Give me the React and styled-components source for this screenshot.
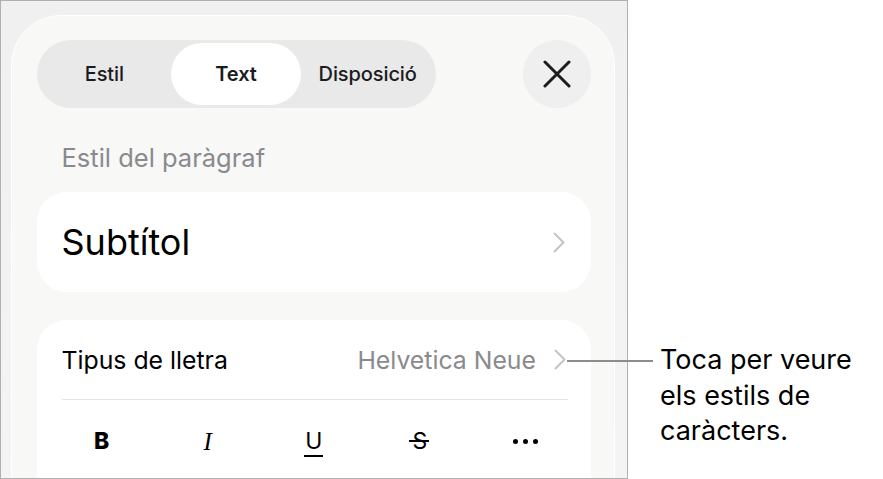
import React from 'react';
import styled, { createGlobalStyle } from 'styled-components';

const Global = createGlobalStyle`
  html, body { margin: 0; padding: 0; background: #ffffff; }
  body {
    font-family: Inter, "Noto Sans", sans-serif;
    -webkit-font-smoothing: antialiased;
  }
`;

const Page = styled.div`
  position: relative;
  display: flex;
  width: 883px;
  height: 479px;
  overflow: hidden;
`;

const Frame = styled.div`
  box-sizing: border-box;
  flex-shrink: 0;
  width: 628px;
  height: 479px;
  border: 1px solid #b0b0b0;
  background: linear-gradient(#f0f0f0, #f4f4f4);
  padding: 14px 12px 0 10px;
  overflow: hidden;
`;

const Sheet = styled.div`
  box-sizing: border-box;
  height: 540px;
  background: #f8f8f7;
  border: 1.5px solid #ffffff;
  border-radius: 50px;
  padding: 24px 23px 0 24.5px;
  display: flex;
  flex-direction: column;
`;

const Header = styled.div`
  display: flex;
  align-items: center;
  justify-content: space-between;
  height: 68px;
`;

const Segmented = styled.div`
  display: flex;
  box-sizing: border-box;
  width: 399px;
  height: 68px;
  padding: 3px;
  border-radius: 34px;
  background: #e9e9e9;
`;

const Segment = styled.div`
  flex: 1;
  display: flex;
  align-items: center;
  justify-content: center;
  border-radius: 31px;
  font-size: 20px;
  letter-spacing: -0.1px;
  font-weight: ${p => (p.$active ? 600 : 500)};
  color: #1c1c1e;
  background: ${p => (p.$active ? '#ffffff' : 'transparent')};
  margin: 0 ${p => (p.$active ? '2px' : '0')};
`;

const CloseButton = styled.div`
  width: 68px;
  height: 68px;
  border-radius: 50%;
  background: #efefef;
  display: flex;
  align-items: center;
  justify-content: center;
`;

const SectionLabel = styled.div`
  margin: 38px 0 22px 25px;
  height: 24px;
  line-height: 24px;
  font-size: 25.5px;
  color: #8a8a8e;
`;

const Card = styled.div`
  background: #ffffff;
  border-radius: 30px;
  margin-top: ${p => p.$gap || 0}px;
`;

const StyleCard = styled(Card)`
  height: 100px;
  display: flex;
  align-items: center;
  justify-content: space-between;
  padding: 0 26px 0 25px;
`;

const BigText = styled.div`
  font-size: 36px;
  color: #000000;
`;

const FontCard = styled(Card)`
  padding: 0 23px 0 25px;
  height: 200px;
`;

const FontRow = styled.div`
  height: 79px;
  display: flex;
  align-items: center;
  border-bottom: 1px solid #e4e4e4;
`;

const RowLabel = styled.div`
  flex: 1;
  font-size: 24.8px;
  color: #000000;
`;

const RowValue = styled.div`
  font-size: 24.8px;
  color: #8a8a8e;
  margin-right: 18px;
`;

const ChevronWrap = styled.div`
  display: flex;
  margin-right: ${p => p.$mr || 0}px;
`;

const FormatRow = styled.div`
  display: grid;
  grid-template-columns: repeat(5, 1fr);
  margin: 0 -11px 0 -13px;
  height: 82px;
  align-items: center;
  justify-items: center;
  color: #000000;
`;

const FormatGlyph = styled.span`
  position: relative;
  display: inline-block;
  font-size: ${p => p.$size || 20}px;
  line-height: 1;
  font-family: ${p => (p.$serif ? '"Liberation Serif", serif' : 'Inter, sans-serif')};
  font-weight: ${p => (p.$bold ? 800 : 400)};
  font-style: ${p => (p.$italic ? 'italic' : 'normal')};
`;

const Underline = styled.span`
  position: absolute;
  left: -1px;
  right: -1px;
  bottom: -4px;
  height: 1.8px;
  background: #000;
`;

const Strike = styled.span`
  position: absolute;
  left: -3px;
  right: -2px;
  top: 47%;
  height: 1.8px;
  background: #000;
`;

const Dots = styled.div`
  display: flex;
  gap: 5px;
`;

const Dot = styled.span`
  width: 5px;
  height: 5px;
  border-radius: 50%;
  background: #000;
`;

const CalloutLine = styled.div`
  position: absolute;
  left: 567px;
  top: 359.5px;
  width: 86px;
  height: 2px;
  background: #8c8c8c;
`;

const Callout = styled.div`
  padding: 342px 0 0 32px;
  font-size: 27px;
  line-height: 35.5px;
  color: #000000;
`;

const Chevron = () => (
  <svg width="12" height="21" viewBox="0 0 12 21" fill="none">
    <path d="M1.5 1.5 L10.5 10.5 L1.5 19.5" stroke="#c4c4c6" strokeWidth="2" strokeLinecap="round" strokeLinejoin="round" />
  </svg>
);

const CloseIcon = () => (
  <svg width="28" height="28" viewBox="0 0 28 28" fill="none">
    <path d="M2 2 L26 26 M26 2 L2 26" stroke="#1c1c1e" strokeWidth="3" strokeLinecap="round" />
  </svg>
);

export default function App() {
  return (
    <Page>
      <Global />
      <Frame>
        <Sheet>
          <Header>
            <Segmented>
              <Segment>Estil</Segment>
              <Segment $active>Text</Segment>
              <Segment>Disposició</Segment>
            </Segmented>
            <CloseButton>
              <CloseIcon />
            </CloseButton>
          </Header>
          <SectionLabel>Estil del paràgraf</SectionLabel>
          <StyleCard>
            <BigText>Subtítol</BigText>
            <Chevron />
          </StyleCard>
          <FontCard $gap={28}>
            <FontRow>
              <RowLabel>Tipus de lletra</RowLabel>
              <RowValue>Helvetica Neue</RowValue>
              <ChevronWrap $mr={2}>
                <Chevron />
              </ChevronWrap>
            </FontRow>
            <FormatRow>
              <FormatGlyph $bold $size={23}>B</FormatGlyph>
              <FormatGlyph $serif $italic $size={25}>I</FormatGlyph>
              <FormatGlyph $size={23}>U<Underline /></FormatGlyph>
              <FormatGlyph $size={23}>S<Strike /></FormatGlyph>
              <Dots>
                <Dot />
                <Dot />
                <Dot />
              </Dots>
            </FormatRow>
          </FontCard>
        </Sheet>
      </Frame>
      <CalloutLine />
      <Callout>
        Toca per veure
        <br />
        els estils de
        <br />
        caràcters.
      </Callout>
    </Page>
  );
}
